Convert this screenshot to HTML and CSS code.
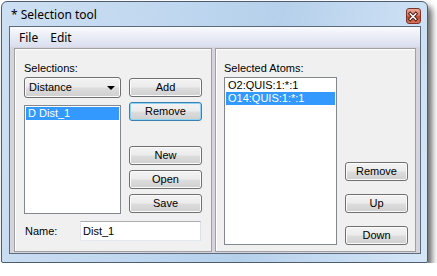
FILE: index.html
```html
<!DOCTYPE html>
<html lang="en">
<head>
  <meta charset="UTF-8" />
  <title>Selection tool</title>
  <link rel="stylesheet" href="styles.css">
</head>
<body>
  <div class="window">
    <div class="titlebar">
      <span class="title">* Selection tool</span>
      <span class="close">
        <svg width="15" height="15" viewBox="0 0 15 15">
          <path d="M4.5 4.5 L10.5 10.5 M10.5 4.5 L4.5 10.5" stroke="#4a1e16" stroke-width="3.6" stroke-linecap="square" fill="none"/>
          <path d="M4.5 4.5 L10.5 10.5 M10.5 4.5 L4.5 10.5" stroke="#ffffff" stroke-width="1.6" stroke-linecap="square" fill="none"/>
        </svg>
      </span>
    </div>

    <div class="client">
      <div class="menubar">
        <span class="menu-item">File</span>
        <span class="menu-item">Edit</span>
      </div>

      <div class="panes">
        <!-- left: saved selections -->
        <div class="panel panel-left">
          <div class="label">Selections:</div>
          <div class="sel-row">
            <div class="sel-col">
              <div class="combo">
                <span>Distance</span>
                <span class="arrow"></span>
              </div>
              <div class="listbox list-sel">
                <div class="item selected">D Dist_1</div>
              </div>
            </div>
            <div class="btn-col">
              <button class="btn btn-add">Add</button>
              <button class="btn btn-focus">Remove</button>
              <button class="btn btn-new">New</button>
              <button class="btn">Open</button>
              <button class="btn">Save</button>
            </div>
          </div>
          <div class="name-row">
            <span class="name-label">Name:</span>
            <input class="text-input" type="text" value="Dist_1" />
          </div>
        </div>

        <!-- right: atoms of the current selection -->
        <div class="panel panel-right">
          <div class="label">Selected Atoms:</div>
          <div class="atoms-row">
            <div class="listbox list-atoms">
              <div class="item">O2:QUIS:1:*:1</div>
              <div class="item selected">O14:QUIS:1:*:1</div>
            </div>
            <div class="atom-btns">
              <button class="btn">Remove</button>
              <button class="btn">Up</button>
              <button class="btn">Down</button>
            </div>
          </div>
        </div>
      </div>
    </div>
  </div>
</body>
</html>
```

FILE: styles.css
```css
/* Base */
* { margin: 0; padding: 0; box-sizing: border-box; }

body { background: #fff; font: 11px "Liberation Sans", Arial, sans-serif; color: #000; }

/* Window frame */
.window {
  margin: 1px 0 0 1px;
  width: 427px;
  height: 262px;
  border: 1px solid #4d5c70;
  border-radius: 6px 6px 2px 2px;
  background: linear-gradient(100deg, #cddff2 0%, #bcd5ee 45%, #b6d0eb 60%, #d5e6f7 100%);
  box-shadow: 4px 5px 6px rgba(0, 0, 0, 0.6);
  padding: 0 6px 8px 7px;
  display: flex;
  flex-direction: column;
}

.titlebar {
  height: 24px;
  display: flex;
  justify-content: space-between;
  align-items: flex-start;
}
.title {
  font: 12px "Noto Sans", sans-serif;
  line-height: 16px;
  padding: 5px 0 0 2px;
  color: #000;
}
.close {
  width: 15px;
  height: 16px;
  margin-top: 6px;
  border: 1px solid #7a3326;
  border-radius: 3px;
  background: linear-gradient(#e9a99a 0%, #d8795f 45%, #c44a2e 55%, #d9755a 100%);
  display: flex;
  align-items: center;
  justify-content: center;
}
.close svg { display: block; margin-left: -1px; }

/* Client area */
.client {
  flex: 1;
  border: 1px solid #5b6a7d;
  background: #d6d3dc;
  display: flex;
  flex-direction: column;
}

.menubar {
  height: 20px;
  padding: 2px 0 0 3px;
  background: linear-gradient(#fafbfd, #e9ecf5 50%, #d9deee);
  font: 12px "Noto Sans", sans-serif;
  line-height: 18px;
  display: flex;
}
.menu-item { padding: 0 6px; }

.panes {
  flex: 1;
  display: flex;
  gap: 3px;
  padding: 1px 4px 1px 4px;
}

.panel {
  background: #f0f0f0;
  border: 1px solid #a0a0a0;
  box-shadow: inset 1px 1px 0 #fff;
}
.panel-left { width: 198px; padding: 13px 0 0 9px; }
.panel-right { flex: 1; padding: 13px 0 0 8px; }

.label { line-height: 13px; height: 13px; }

/* Buttons */
.btn {
  display: block;
  height: 19px;
  border: 1px solid #707070;
  border-radius: 3px;
  background: linear-gradient(#f3f3f3 0%, #ebebeb 48%, #dddddd 52%, #cfcfcf 100%);
  box-shadow: inset 0 0 0 1px #fbfbfb;
  font: 11px "Liberation Sans", Arial, sans-serif;
  color: #000;
  text-align: center;
  line-height: 17px;
}
.btn-focus {
  border-color: #3c7fb1;
  box-shadow: inset 0 0 0 1px #8fd5f3;
}

/* Left panel */
.sel-row { display: flex; gap: 8px; margin-top: 2px; }
.sel-col { width: 97px; }
.combo {
  height: 21px;
  border: 1px solid #707070;
  border-radius: 3px;
  background: linear-gradient(#f3f3f3 0%, #ebebeb 48%, #dddddd 52%, #cfcfcf 100%);
  box-shadow: inset 0 0 0 1px #fbfbfb;
  padding: 0 5px 0 4px;
  line-height: 19px;
  display: flex;
  justify-content: space-between;
  align-items: center;
}
.arrow {
  width: 0;
  height: 0;
  border-left: 4px solid transparent;
  border-right: 4px solid transparent;
  border-top: 4px solid #000;
}

.listbox {
  background: #fff;
  border: 1px solid #828790;
  padding: 1px;
}
.list-sel { height: 109px; margin-top: 7px; }
.item { height: 13px; line-height: 13px; padding-left: 2px; }
.item.selected { background: #3399ff; color: #fff; }

.btn-col { width: 73px; display: flex; flex-direction: column; gap: 5px; padding-top: 1px; }
.btn-new { margin-top: 20px; }

.name-row { display: flex; align-items: center; margin-top: 7px; }
.name-label { width: 56px; padding-left: 1px; line-height: 13px; }
.text-input {
  width: 121px;
  height: 20px;
  border: 1px solid;
  border-color: #abadb3 #dbdfe6 #e3e9ef #e2e3ea;
  background: #fff;
  font: 11px "Liberation Sans", Arial, sans-serif;
  padding: 0 2px;
}

/* Right panel */
.atoms-row { display: flex; gap: 8px; margin-top: 2px; }
.list-atoms { width: 113px; height: 168px; }
.atom-btns {
  width: 63px;
  display: flex;
  flex-direction: column;
  justify-content: flex-end;
  gap: 13px;
}
```
